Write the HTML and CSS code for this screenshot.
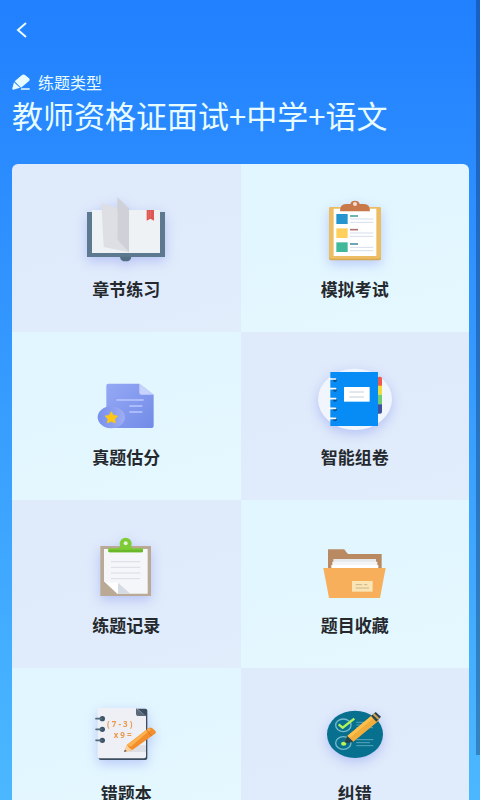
FILE: index.html
```html
<!DOCTYPE html>
<html lang="zh-CN">
<head>
  <meta charset="UTF-8" />
  <title>练题类型</title>
  <meta name="viewport" content="width=device-width, initial-scale=1" />
  <link rel="stylesheet" href="styles.css">
</head>
<body>

  <header class="cabecera">
    <button class="btn-volver" type="button" aria-label="返回">
      <svg width="12" height="16" viewBox="0 0 12 16"><path d="M10 1 2 8l8 7" fill="none" stroke="#e8fcff" stroke-width="2"/></svg>
    </button>
    <p class="tipo">
      <svg width="18" height="16" viewBox="0 0 54 48" fill="#e8fcff">
        <path d="M30 3q5-3 9 0l12 10q4 4 0 8L27 41 8 22zM6 25l18 16-20 6q-4 0-3-4zM28 43h25v4H26z"/>
      </svg>
      练题类型
    </p>
    <h1>教师资格证面试+中学+语文</h1>
  </header>

  <nav class="menu">
    <a class="celda" href="#capitulos">
      <!-- libro -->
      <svg class="icono sombra" viewBox="3 0 330 270">
        <path d="M51 81h234v135H51z" fill="#5c7990"/>
        <path d="M150 215h34q-1 14-17 14t-17-14z" fill="#536f86"/>
        <path d="M66 75h204v129H66z" fill="#eef2f5"/>
        <path d="M94 53l48 15v95l35 39-76-16z" fill="#dedfe5"/>
        <path d="M142 37l35 33v132l-35-38z" fill="#cfd0d8"/>
        <path d="M230 75h22v32l-11-6-11 6z" fill="#df5751"/>
        <path d="M236 77v22M242 77v20" stroke="#e87973" stroke-width="2"/>
      </svg>
      <span>章节练习</span>
    </a>
    <a class="celda" href="#simulacro">
      <svg class="icono sombra" viewBox="0 0 330 270">
        <rect x="87" y="66" width="156" height="160" rx="6" fill="#d9a951"/>
        <rect x="87" y="66" width="156" height="155" rx="6" fill="#edbd64"/>
        <path d="M101 71h128v142H101z" fill="#fff"/>
        <path d="M120 79q0-22 18-22h13q2-10 14-10t14 10h13q18 0 18 22z" fill="#c9784a"/>
        <circle cx="165" cy="57" r="6" fill="#f5dfd2"/>
        <path d="M109 87h34v30h-34z" fill="#2694cf"/>
        <path d="M109 130h34v29h-34z" fill="#ffd05b"/>
        <path d="M109 172h34v29h-34z" fill="#40b99a"/>
        <path d="M150 93h24" stroke="#4ba99e" stroke-width="5"/>
        <path d="M150 134h24" stroke="#b47575" stroke-width="5"/>
        <path d="M150 177h24" stroke="#4c94a7" stroke-width="5"/>
        <path d="M150 102h70M150 112h70M150 144h70M150 154h70M150 187h70M150 197h70" stroke="#d5deeb" stroke-width="3"/>
      </svg>
      <span>模拟考试</span>
    </a>
    <a class="celda" href="#estimacion">
      <svg class="icono" viewBox="3 -21 330 270">
        <defs>
          <linearGradient id="hoja" x1="0" y1="0" x2="1" y2="1"><stop offset="0" stop-color="#95a9f4"/><stop offset="1" stop-color="#738be8"/></linearGradient>
          <linearGradient id="sello" x1="0" y1="0" x2="1" y2="0"><stop offset="0" stop-color="#7790ed"/><stop offset="1" stop-color="#9eadf3"/></linearGradient>
        </defs>
        <path d="M115 71h93l43 33v94q0 6-6 6H115q-6 0-6-6V77q0-6 6-6z" fill="url(#hoja)"/>
        <path d="M208 71l43 33h-37q-6 0-6-6z" fill="#c8d2ff"/>
        <path d="M139 120h82M178 138h39M178 156h39" stroke="#b9c7ff" stroke-width="5"/>
        <ellipse cx="124" cy="172" rx="41" ry="33" fill="url(#sello)"/>
        <path d="M124 155l6 11 13 2-9 9 2 12-12-5-12 5 2-12-9-9 13-2z" fill="#ffc714" stroke="#ffc714" stroke-width="2" stroke-linejoin="round"/>
      </svg>
      <span>真题估分</span>
    </a>
    <a class="celda" href="#examen">
      <svg class="icono sombra" viewBox="0 -21 330 270">
        <ellipse cx="165" cy="118" rx="111" ry="92" fill="#f1f5fd"/>
        <path d="M233 50h8q5 0 5 5v23h-13z" fill="#ed594a"/>
        <path d="M233 77h13v27h-13z" fill="#efdc3a"/>
        <path d="M233 104h13v29h-13z" fill="#72cc72"/>
        <path d="M233 133h13v22q0 6-6 6h-7z" fill="#3d529b"/>
        <path d="M91 36h143v162H91z" fill="#078cf5"/>
        <path d="M132 81h77v44h-77z" fill="#fff"/>
        <path d="M148 96h44M148 111h44" stroke="#d9dfe8" stroke-width="4"/>
        <g fill="#06518f"><circle cx="105" cy="60" r="6"/><circle cx="105" cy="89" r="6"/><circle cx="105" cy="119" r="6"/><circle cx="105" cy="148" r="6"/><circle cx="105" cy="178" r="6"/></g>
        <path d="M89 57h18M89 86h18M89 116h18M89 145h18M89 175h18" stroke="#fff" stroke-width="5" stroke-linecap="round"/>
      </svg>
      <span>智能组卷</span>
    </a>
    <a class="celda" href="#historial">
      <svg class="icono sombra" viewBox="3 -12 330 270">
        <path d="M91 63h152v150H91z" fill="#baa995"/>
        <path d="M102 72h131v134h-91l-40-37z" fill="#f5f6fa"/>
        <path d="M102 169l42 38v-35q-22 4-42-3z" fill="#fff"/>
        <path d="M144 173l37 33h-37z" fill="#d6dae3"/>
        <path d="M123 110h88M123 127h88M123 144h88M123 161h88" stroke="#dadce6" stroke-width="3"/>
        <circle cx="167" cy="56" r="18" fill="#7dcc35"/>
        <path d="M115 70h30l10-8h24l10 8h30v8q0 4-4 4h-96q-4 0-4-4z" fill="#7dcc35"/>
        <path d="M115 74h104v4q0 4-4 4h-96q-4 0-4-4z" fill="#69b72b"/>
        <circle cx="167" cy="55" r="6" fill="#e5f5dc"/>
      </svg>
      <span>练题记录</span>
    </a>
    <a class="celda" href="#favoritos">
      <svg class="icono" viewBox="0 -12 330 270">
        <path d="M84 73h46q5 0 8 7l6 7h101v60H84z" fill="#b98a61"/>
        <path d="M100 102h128v35H100z" fill="#e5e9ec"/>
        <path d="M97 110h135v28H97z" fill="#f3f5f6"/>
        <path d="M94 120h141v25H94z" fill="#fff"/>
        <path d="M70 129h187l-17 90H87z" fill="#f7af5c"/>
        <path d="M156 168h62v32h-62z" fill="#fbe5b5"/>
        <path d="M167 179h20M192 179h10M167 189h40" stroke="#cab68d" stroke-width="3"/>
      </svg>
      <span>题目收藏</span>
    </a>
    <a class="celda" href="#errores">
      <svg class="icono sombra" viewBox="3 -15 330 270">
        <rect x="86" y="44" width="146" height="154" rx="6" fill="#3c4e60"/>
        <path d="M88 42h111l29 25v120q0 6-6 6H88q-5 0-5-6V47q0-5 5-5z" fill="#eef0f5"/>
        <path d="M198 43l30 23h-24q-6 0-6-6z" fill="#596b7b"/>
        <path d="M165 174l38-20h25v20z" fill="#dcdfe5"/>
        <g fill="#3d5366"><circle cx="97" cy="74" r="8"/><circle cx="97" cy="106" r="8"/><circle cx="97" cy="139" r="8"/></g>
        <path d="M78 74h17M78 106h17M78 139h17" stroke="#526b7c" stroke-width="5" stroke-linecap="round"/>
        <g class="cuenta">
          <text x="111" y="99">( 7 - 3 )</text>
          <text x="131" y="132">x 9 =</text>
        </g>
        <path d="M162 174l9-22 65-50q5-4 11 1l9 8q4 5-2 9l-67 48z" fill="#f28e2c"/>
        <path d="M172 153l65-50 6 3-61 52z" fill="#ffb350"/>
        <path d="M162 174l9-22q4 9 16 16z" fill="#ffd19a"/>
        <path d="M162 174l3-7 5 4z" fill="#3f4b58"/>
        <path d="M230 108l15 18" stroke="#d67924" stroke-width="3"/>
      </svg>
      <span>错题本</span>
    </a>
    <a class="celda" href="#correccion">
      <svg class="icono sombra" viewBox="0 -15 330 270">
        <ellipse cx="165" cy="121" rx="84" ry="71" fill="#08708f"/>
        <g fill="none" stroke="#75b9cd" stroke-width="4"><ellipse cx="130" cy="94" rx="23" ry="19"/><ellipse cx="130" cy="147" rx="23" ry="19"/></g>
        <path d="M169 85h50M169 93h40M169 101h50M169 137h51M169 146h41M169 155h51" stroke="#57a6bb" stroke-width="3"/>
        <path d="M116 91l12 10 35-27" fill="none" stroke="#b5f25c" stroke-width="7"/>
        <ellipse cx="131" cy="149" rx="8" ry="6" fill="#b5f25c"/>
        <path d="M133 144l9-18 76-64 20 17-79 65z" fill="#efad3c"/>
        <path d="M142 126l76-64 7 6-77 65z" fill="#ffc04b"/>
        <path d="M133 144l9-18 18 17-18 5z" fill="#224652"/>
        <path d="M213 66l14-12 16 14-14 15z" fill="#254250"/>
        <path d="M218 62l5-4 15 15-4 4z" fill="#d4a052"/>
      </svg>
      <span>纠错</span>
    </a>
  </nav>

  <div class="barra"></div>

</body>
</html>
```
FILE: styles.css
```css
* {
  box-sizing: border-box;
}
body {
  position: relative;
  height: 100vh;
  margin: 0;
  padding: 16px 11px 0 12px;
  overflow: hidden;
  background: linear-gradient(#2080ff, #2b8cff 22%, #48b4ff 92%, #4ab7ff);
  font-family: "Noto Sans CJK SC", sans-serif;
  color: #e8fcff;
}
.btn-volver {
  display: flex;
  align-items: center;
  width: 28px;
  height: 28px;
  padding: 0 4px;
  border: none;
  background: none;
  cursor: pointer;
}
.tipo {
  display: flex;
  align-items: center;
  gap: 8px;
  margin: 26px 0 0;
  font-size: 16px;
  line-height: 24px;
}
h1 {
  margin: 0 0 28px;
  font-size: 31px;
  font-weight: 400;
  line-height: 42px;
}
.menu {
  display: grid;
  grid-template-columns: 1fr 1fr;
  border-radius: 6px 6px 0 0;
  overflow: hidden;
}
.celda {
  display: flex;
  flex-direction: column;
  align-items: center;
  gap: 2px;
  padding: 21px 0 31px;
  background: linear-gradient(165deg, #e2f6ff 40%, #e5f8ff);
  color: #25292e;
  font-size: 17px;
  font-weight: 700;
  line-height: 24px;
  text-decoration: none;
}
.celda:nth-child(4n + 1),
.celda:nth-child(4n) {
  background: linear-gradient(165deg, #dfeafb 40%, #e1edfb);
}
.icono {
  width: 110px;
  height: 90px;
  overflow: visible;
}
.sombra {
  filter: drop-shadow(0 4px 6px rgba(110, 120, 235, 0.35));
}
.cuenta {
  fill: #e99a4c;
  font-family: "Noto Sans", sans-serif;
  font-size: 24px;
  font-weight: 700;
}
/* barra de desplazamiento */
.barra {
  position: absolute;
  top: 0;
  right: 0;
  width: 4px;
  height: 755px;
  background: rgba(0, 20, 60, 0.3);
}
```
